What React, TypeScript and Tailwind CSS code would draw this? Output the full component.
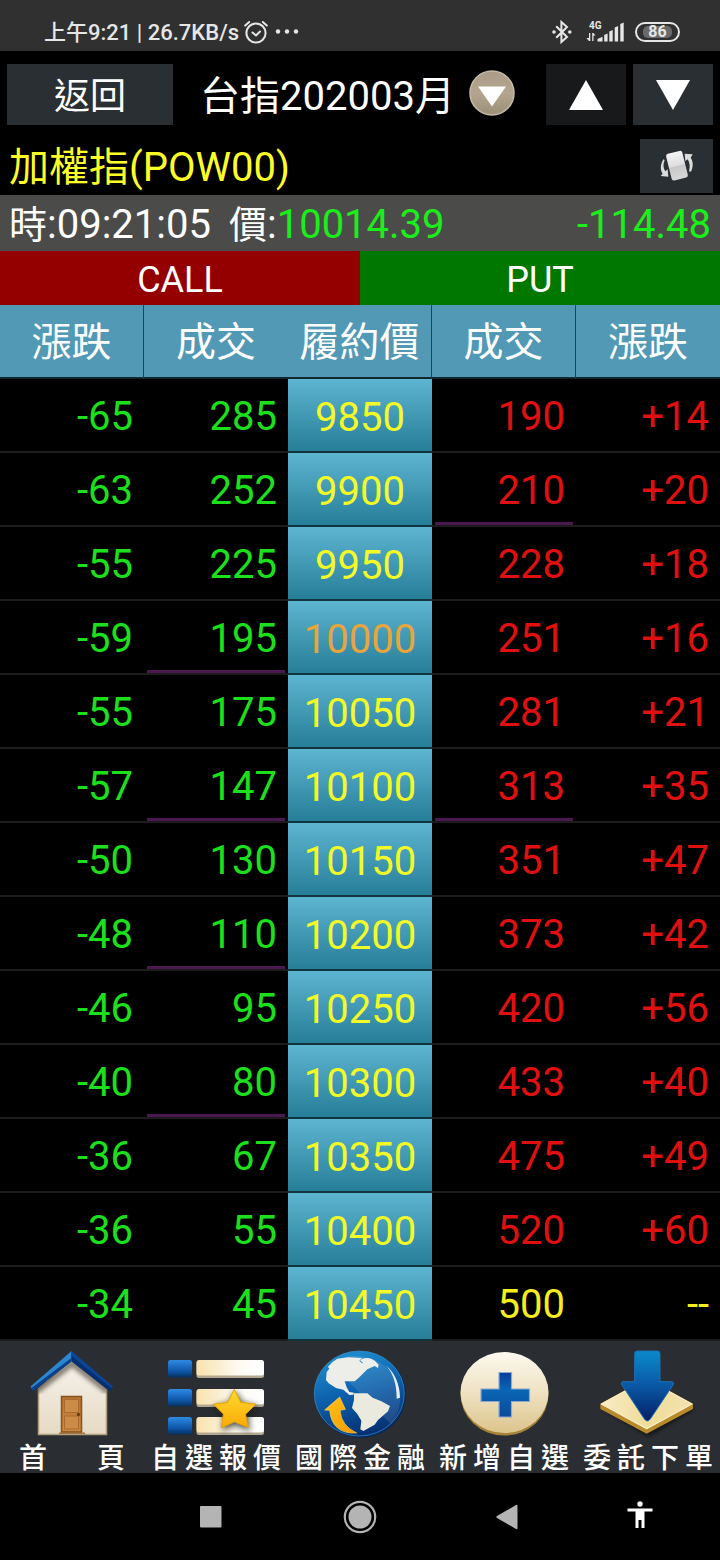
import React from "react";

type Quote = {
  strike: number;
  call: string;
  callChange: string;
  put: string;
  putChange: string;
  callMark?: boolean;
  putMark?: boolean;
};

const quotes: Quote[] = [
  { strike: 9850, callChange: "-65", call: "285", put: "190", putChange: "+14" },
  { strike: 9900, callChange: "-63", call: "252", put: "210", putChange: "+20", putMark: true },
  { strike: 9950, callChange: "-55", call: "225", put: "228", putChange: "+18" },
  { strike: 10000, callChange: "-59", call: "195", put: "251", putChange: "+16", callMark: true },
  { strike: 10050, callChange: "-55", call: "175", put: "281", putChange: "+21" },
  { strike: 10100, callChange: "-57", call: "147", put: "313", putChange: "+35", callMark: true, putMark: true },
  { strike: 10150, callChange: "-50", call: "130", put: "351", putChange: "+47" },
  { strike: 10200, callChange: "-48", call: "110", put: "373", putChange: "+42", callMark: true },
  { strike: 10250, callChange: "-46", call: "95", put: "420", putChange: "+56" },
  { strike: 10300, callChange: "-40", call: "80", put: "433", putChange: "+40", callMark: true },
  { strike: 10350, callChange: "-36", call: "67", put: "475", putChange: "+49" },
  { strike: 10400, callChange: "-36", call: "55", put: "520", putChange: "+60" },
  { strike: 10450, callChange: "-34", call: "45", put: "500", putChange: "--" },
];

const AT_THE_MONEY = 10000;

function StatusBar() {
  return (
    <div className="flex h-[51px] items-center justify-between bg-[#303030] pl-11 pr-10 pt-3 text-[#e6e6e6]">
      <div className="flex items-center gap-1 text-[22px] font-medium leading-7">
        <span className="pt-[2px]">上午9:21 | 26.7KB/s</span>
        <svg width="26" height="24" viewBox="0 0 26 24" fill="none" stroke="currentColor" strokeWidth="2" strokeLinecap="round" strokeLinejoin="round">
          <circle cx="13" cy="13" r="9.6" />
          <path d="M9.5 12.5l3.5 3 4-4M2.2 5.6l4-3.6M23.8 5.6l-4-3.6" />
        </svg>
        <svg width="26" height="24" viewBox="0 0 26 24" fill="currentColor">
          <circle cx="5" cy="11.5" r="2.2" />
          <circle cx="14" cy="11.5" r="2.2" />
          <circle cx="23" cy="11.5" r="2.2" />
        </svg>
      </div>
      <div className="flex items-center">
        <svg width="20" height="24" viewBox="0 0 20 24" fill="none" stroke="currentColor" strokeWidth="2">
          <path d="M4.2 6.2L15 17l-5.6 5V2L15 7 4.2 17.8" />
          <circle cx="2" cy="12" r="1.8" fill="currentColor" stroke="none" />
          <circle cx="17.8" cy="12" r="1.8" fill="currentColor" stroke="none" />
        </svg>
        <svg className="ml-3.5 mr-2.5" width="39" height="24" viewBox="0 0 39 24" fill="currentColor">
          <text x="3" y="9" fontSize="10" fontWeight="700">4G</text>
          <path d="M3 13h1.3v8H3l-2.600-3h2.600zM6.200 21v-8h1.300l2 2.600H7.500V21zM11.500 21.500v-2.500l5-2.200v4.700zM18.200 21.500V15l3.400-1.500v8zM23.300 21.500V11.500l3.400-1.500v11.500zM28.700 21.500V7.500l3.400-1.500v15.500zM34.300 21.500V4l3.400-1.500v19z" />
        </svg>
        <div className="flex h-5 w-[45px] rounded-full border-2 border-current p-[2px]">
          <div className="mx-1 flex flex-1 items-center justify-center rounded-[5px] bg-[#6a6a6a] text-[16px] font-bold leading-4">86</div>
        </div>
      </div>
    </div>
  );
}

function RotateIcon() {
  return (
    <svg width="34" height="32" viewBox="0 0 102 96">
      <defs>
        <linearGradient id="device" x1="0" y1="0" x2="0" y2="1">
          <stop offset="0" stopColor="#f4f4f4" />
          <stop offset=".5" stopColor="#dedede" />
          <stop offset=".52" stopColor="#c9c9c9" />
          <stop offset="1" stopColor="#d6d6d6" />
        </linearGradient>
      </defs>
      <rect x="26" y="6" width="50" height="82" rx="7" fill="url(#device)" transform="rotate(-14 51 47)" />
      <path d="M10 28C1 44 0 60 8 71l-6 7 23 2-2-22-7 6C9 54 9 42 14 30z" fill="#dcdcdc" />
      <path d="M93 65c7-15 7-31-1-42l6-10-24-2 2 22 7-5c6 9 8 22 4 36z" fill="#dcdcdc" />
    </svg>
  );
}

function TopBar() {
  return (
    <header>
      <div className="flex gap-[7px] px-[7px] pt-[13px]">
        <button className="h-[61px] w-[166px] bg-[#2a2f33] pt-1 text-[36px] leading-10">返回</button>
        <button className="flex flex-1 items-center justify-center gap-[14px] pr-1 text-[40px] leading-[48px]">
          <span className="pt-1">台指202003月</span>
          <svg className="mb-1" width="46" height="46" viewBox="0 0 46 46">
            <defs>
              <linearGradient id="knob" x1="0" y1="0" x2="0" y2="1">
                <stop offset="0" stopColor="#a99b85" />
                <stop offset=".5" stopColor="#b3a58e" />
                <stop offset="1" stopColor="#9c9079" />
              </linearGradient>
            </defs>
            <circle cx="23" cy="23" r="22" fill="url(#knob)" stroke="#c4bba9" strokeWidth="1.500" />
            <path d="M9 16.500h28L23 36.500z" fill="#fff" />
          </svg>
        </button>
        <button aria-label="上一個" className="flex h-[61px] w-20 items-center justify-center bg-[#18191a]">
          <svg width="34" height="30" viewBox="0 0 34 30" fill="#fff"><path d="M17 0l17 30H0z" /></svg>
        </button>
        <button aria-label="下一個" className="flex h-[61px] w-20 items-center justify-center bg-[#2a2f33]">
          <svg width="34" height="30" viewBox="0 0 34 30" fill="#fff"><path d="M0 0h34L17 30z" /></svg>
        </button>
      </div>
      <div className="mb-[2px] mt-[14px] flex items-center justify-between pl-[9px] pr-[7px]">
        <h1 className="pt-1 text-[40px] leading-[50px] text-[#ffff28]">加權指(POW00)</h1>
        <button aria-label="旋轉" className="flex h-[54px] w-[73px] items-center justify-center bg-[#2a2f33]">
          <RotateIcon />
        </button>
      </div>
    </header>
  );
}

function QuoteBar() {
  return (
    <div className="flex h-[56px] items-center justify-between bg-[#4b4c4a] px-[9px] pt-1 text-[40px] leading-[48px]">
      <div className="flex items-center gap-[18px]">
        <span><span className="text-[38px]">時</span>:09:21:05</span>
        <span><span className="text-[38px]">價</span>:<span className="text-[#1bee1b]">10014.39</span></span>
      </div>
      <span className="text-[#1bee1b]">-114.48</span>
    </div>
  );
}

function HeadCell({ divided = false, children }: { divided?: boolean; children: React.ReactNode }) {
  return (
    <th className={`border-b-2 border-b-[#12272d] px-0 pb-0 pt-1 font-normal ${divided ? "border-r border-r-[#28434f]" : ""}`}>
      {children}
    </th>
  );
}

function Cell({ value, tone, marked = false }: { value: string; tone: string; marked?: boolean }) {
  return (
    <td className="border-b-2 border-[#1c1c1c] p-0">
      <div className={`mx-[3px] flex h-[72px] items-center justify-end border-b-[3px] pr-2 pt-[6px] ${tone} ${marked ? "border-[#4a1a4e]" : "border-transparent"}`}>
        {value}
      </div>
    </td>
  );
}

function OptionTable() {
  return (
    <table className="w-full table-fixed border-separate border-spacing-0 text-[40px] leading-[48px]">
      <thead>
        <tr className="h-[74px] bg-[#5299b6]">
          <HeadCell divided>漲跌</HeadCell>
          <HeadCell>成交</HeadCell>
          <HeadCell divided>履約價</HeadCell>
          <HeadCell divided>成交</HeadCell>
          <HeadCell>漲跌</HeadCell>
        </tr>
      </thead>
      <tbody>
        {quotes.map((q) => {
          const putTone = q.putChange === "--" ? "text-[#f5ee1c]" : "text-[#e01010]";
          return (
            <tr key={q.strike}>
              <Cell value={q.callChange} tone="text-[#1be01b]" />
              <Cell value={q.call} tone="text-[#1be01b]" marked={q.callMark} />
              <td className="border-b-2 border-[#12343d] p-0">
                <div className={`flex h-[72px] items-center justify-center bg-linear-to-b from-[#5cb5d1] to-[#267e98] pt-[6px] ${q.strike === AT_THE_MONEY ? "text-[#e8a53c]" : "text-[#f2fb28]"}`}>
                  {q.strike}
                </div>
              </td>
              <Cell value={q.put} tone={putTone} marked={q.putMark} />
              <Cell value={q.putChange} tone={putTone} />
            </tr>
          );
        })}
      </tbody>
    </table>
  );
}

function HomeIcon() {
  return (
    <svg width="144" height="94" viewBox="0 0 144 94">
      <defs>
        <linearGradient id="wall" x1="0" y1="0" x2="0" y2="1">
          <stop offset="0" stopColor="#f6f3ee" />
          <stop offset="1" stopColor="#e6dac3" />
        </linearGradient>
        <linearGradient id="door" x1="0" y1="0" x2="0" y2="1">
          <stop offset="0" stopColor="#b87431" />
          <stop offset="1" stopColor="#c98a45" />
        </linearGradient>
        <filter id="soft"><feGaussianBlur stdDeviation="2" /></filter>
        <clipPath id="wallClip"><path d="M72 14l35 30v46H38V44z" /></clipPath>
      </defs>
      <path d="M72 14l34.500 30v45.500h-68V44z" fill="url(#wall)" stroke="#b09f7c" strokeWidth="1.500" />
      <path d="M36 46L72 18l36 28" fill="none" stroke="#5a5042" strokeOpacity=".7" strokeWidth="7" filter="url(#soft)" clipPath="url(#wallClip)" />
      <path d="M71.500 6L30.500 41.500l2.500 4 38.500-29z" fill="#2c86d0" />
      <path d="M31.500 43l1.500 3.500 38.500-30V13z" fill="#0b3f86" />
      <path d="M71.500 6L113 41.500l-3 4L71.500 15z" fill="#0c4596" />
      <path d="M71.500 11L112 43.500l-2 3L71.500 16.500z" fill="#07306f" />
      <path d="M59 87.500h26v1.500H59z" fill="#a8743f" />
      <rect x="61.500" y="51.500" width="20" height="35.500" fill="url(#door)" stroke="#84511f" strokeWidth="1.500" />
      <path d="M64.500 54.500h14v13h-14zM64.500 71h14v13h-14z" fill="#cb8c48" stroke="#a96a2c" />
      <circle cx="78.500" cy="69.500" r="1.700" fill="#6b3e15" />
    </svg>
  );
}

function WatchListIcon() {
  return (
    <svg width="144" height="94" viewBox="0 0 144 94">
      <defs>
        <linearGradient id="tile" x1="0" y1="0" x2="0" y2="1">
          <stop offset="0" stopColor="#2f8ae4" />
          <stop offset=".65" stopColor="#0e55a6" />
          <stop offset="1" stopColor="#08305f" />
        </linearGradient>
        <linearGradient id="strip" x1="0" y1="0" x2="1" y2="0">
          <stop offset="0" stopColor="#f9e2ad" />
          <stop offset=".65" stopColor="#fdfbf5" />
          <stop offset="1" stopColor="#fff" />
        </linearGradient>
        <linearGradient id="star" x1="0" y1="0" x2="0" y2="1">
          <stop offset="0" stopColor="#ffdb2e" />
          <stop offset="1" stopColor="#f9a908" />
        </linearGradient>
        <filter id="starShadow" x="-30%" y="-30%" width="160%" height="160%"><feGaussianBlur stdDeviation="3" /></filter>
      </defs>
      {[15, 44, 72].map((y) => (
        <g key={y}>
          <rect x="24" y={y} width="24" height="17.500" rx="2.500" fill="url(#tile)" />
          <rect x="52.500" y={y + 1} width="67.500" height="17" rx="2.500" fill="#b2a890" />
          <rect x="52.500" y={y} width="67.500" height="15.500" rx="2.500" fill="url(#strip)" />
        </g>
      ))}
      <path d="M91 46l8 12 15 3-10 10 2 15-15-6-13 6 2-15-10-10 15-3z" fill="#1d1a14" fillOpacity=".75" filter="url(#starShadow)" />
      <path d="M90.300 44.500l6.500 12.800 15.200 1.900-10.500 10 2.700 13.300-13.700-5.700-13.200 5.900 2.100-13.700-10-9.800 14.200-1.900z" fill="url(#star)" stroke="#e8a400" strokeLinejoin="round" />
    </svg>
  );
}

function GlobeIcon() {
  return (
    <svg width="144" height="94" viewBox="0 0 144 94">
      <defs>
        <linearGradient id="sea" x1=".3" y1="0" x2=".6" y2="1">
          <stop offset="0" stopColor="#1f8fd0" />
          <stop offset=".5" stopColor="#0c5eaa" />
          <stop offset="1" stopColor="#052e70" />
        </linearGradient>
        <linearGradient id="turn" x1="0" y1="0" x2="1" y2="1">
          <stop offset="0" stopColor="#ffc21a" />
          <stop offset="1" stopColor="#f59a00" />
        </linearGradient>
      </defs>
      <ellipse cx="72.500" cy="50" rx="45.500" ry="43" fill="#082a5c" />
      <ellipse cx="71.300" cy="48.500" rx="45" ry="42.500" fill="url(#sea)" stroke="#3b8fc6" strokeOpacity=".7" />
      <path d="M42 18A45 42.500 0 0 1 103 79z" fill="#fff" fillOpacity=".1" />
      <g transform="translate(-8 -15) scale(.33333)">
        <path d="M172 86L205 82L246 84L238 92L246 100L262 97L266 88L284 92L296 104L294 114L284 108L262 118L238 142L224 154L194 154L200 172L208 186L222 188L220 194L208 195L190 179L168 174L146 160L138 150L140 126L148 116L144 110L158 96z" fill="#edeee9" />
        <path d="M222 190L262 190L278 203L304 214L330 228L324 244L294 270L284 284L250 303L241 298L244 272L232 252L216 234L222 210z" fill="#ebeadf" />
        <path d="M240 90Q256 80 276 87L290 98L270 96L252 102z" fill="#edeee9" />
        <path d="M317 106Q358 140 360 203L350 206Q350 140 317 106z" fill="#e6eff6" />
        <path d="M179 201L196 238L180 241Q184 288 230 309Q156 313 149 241L134 240z" fill="url(#turn)" stroke="#ffd34d" strokeWidth="2" />
      </g>
    </svg>
  );
}

function AddIcon() {
  return (
    <svg width="144" height="94" viewBox="0 0 144 94">
      <defs>
        <linearGradient id="coin" x1="0" y1="0" x2="0" y2="1">
          <stop offset="0" stopColor="#fdf9ef" />
          <stop offset=".5" stopColor="#efe2c2" />
          <stop offset="1" stopColor="#dcc48c" />
        </linearGradient>
        <linearGradient id="cross" x1="0" y1="0" x2="0" y2="1">
          <stop offset="0" stopColor="#0a3c9c" />
          <stop offset=".4" stopColor="#0a66b4" />
          <stop offset="1" stopColor="#0b4a9c" />
        </linearGradient>
      </defs>
      <ellipse cx="72.500" cy="49.500" rx="44" ry="41" fill="#a58438" />
      <ellipse cx="72.500" cy="47.500" rx="44" ry="40.500" fill="url(#coin)" />
      <path d="M67 27.500h12.500V44h18v12.500h-18V72H67V56.500H49V44h18z" fill="url(#cross)" stroke="#8ea8cf" strokeWidth="1.200" />
    </svg>
  );
}

function OrderIcon() {
  return (
    <svg width="144" height="94" viewBox="0 0 144 94">
      <defs>
        <linearGradient id="plate" x1="0" y1="0" x2="1" y2="0">
          <stop offset="0" stopColor="#f9ecca" />
          <stop offset=".5" stopColor="#efdc96" />
          <stop offset="1" stopColor="#f3e2b2" />
        </linearGradient>
        <linearGradient id="down" x1="0" y1="0" x2="0" y2="1">
          <stop offset="0" stopColor="#0a8acb" />
          <stop offset=".5" stopColor="#0a57a4" />
          <stop offset="1" stopColor="#041f66" />
        </linearGradient>
        <filter id="plateShadow" x="-20%" y="-20%" width="140%" height="150%"><feGaussianBlur stdDeviation="6" /></filter>
      </defs>
      <g transform="translate(-76 -15) scale(.33333)" strokeLinejoin="round">
        <path d="M306 236l136-72 144 72-140 84z" fill="#000" fillOpacity=".55" filter="url(#plateShadow)" />
        <path d="M304 223l136-74 136 74v12l-136 73-136-73z" fill="#b98a2c" stroke="#b98a2c" strokeWidth="6" />
        <path d="M304 222l136-74 136 74-136 74z" fill="url(#plate)" stroke="#fbeec6" strokeWidth="4" />
        <path d="M412 63h60q8 0 8 8v84h36q8 2 3 10l-68 102q-9 12-18 0l-67-102q-5-8 2-10h36V71q0-8 8-8z" fill="url(#down)" stroke="#1d6fb5" strokeWidth="3" />
      </g>
    </svg>
  );
}

const tabs = [
  { label: "首頁", icon: <HomeIcon />, width: "w-[106px]" },
  { label: "自選報價", icon: <WatchListIcon />, width: "w-[130px]" },
  { label: "國際金融", icon: <GlobeIcon />, width: "w-[130px]" },
  { label: "新增自選", icon: <AddIcon />, width: "w-[130px]" },
  { label: "委託下單", icon: <OrderIcon />, width: "w-[130px]" },
];

function TabBar() {
  return (
    <nav className="grid grid-cols-5 bg-[#2a2e32] pt-1">
      {tabs.map((t) => (
        <button key={t.label} className="flex flex-col items-center">
          {t.icon}
          <span className={`${t.width} pt-[6px] text-[28px] font-medium leading-[28px] [text-align-last:justify]`}>{t.label}</span>
        </button>
      ))}
    </nav>
  );
}

function SystemNav() {
  return (
    <div className="grid h-[87px] grid-cols-[136fr_149fr_150fr_144fr_121fr_20fr] items-center text-[#b4b4b4]">
      <span />
      <button aria-label="最近" className="flex justify-center">
        <svg width="22" height="22" viewBox="0 0 22 22" fill="currentColor"><rect width="21.500" height="21.500" rx="1" /></svg>
      </button>
      <button aria-label="主畫面" className="flex justify-center">
        <svg width="34" height="34" viewBox="0 0 34 34" fill="currentColor">
          <circle cx="17" cy="17" r="15.200" fill="none" stroke="currentColor" strokeWidth="2.200" />
          <circle cx="17" cy="17" r="11.500" />
        </svg>
      </button>
      <button aria-label="返回上頁" className="flex justify-center">
        <svg width="22" height="26" viewBox="0 0 22 26" fill="currentColor"><path d="M20 1q1.500-.7 1.500 1v22q0 1.700-1.500 1L1 14q-1.300-1 0-2z" /></svg>
      </button>
      <button aria-label="協助工具" className="flex justify-center pb-1 text-white">
        <svg width="26" height="28" viewBox="0 0 26 28" fill="currentColor">
          <circle cx="13" cy="3" r="2.700" />
          <path d="M.5 7.500h25v3h-8V27h-3v-8h-3v8h-3V10.500h-8z" />
        </svg>
      </button>
      <span />
    </div>
  );
}

export default function App() {
  return (
    <div className="min-h-screen bg-black font-[Roboto,'Noto_Sans_CJK_TC',sans-serif] text-white" lang="zh-TW">
      <StatusBar />
      <TopBar />
      <main>
        <QuoteBar />
        <div className="grid grid-cols-2 text-center text-[36px] leading-[50px]">
          <div className="bg-[#940000] pt-1">
            <h2>CALL</h2>
          </div>
          <div className="bg-[#007800] pt-1">
            <h2>PUT</h2>
          </div>
        </div>
        <OptionTable />
      </main>
      <TabBar />
      <SystemNav />
    </div>
  );
}
